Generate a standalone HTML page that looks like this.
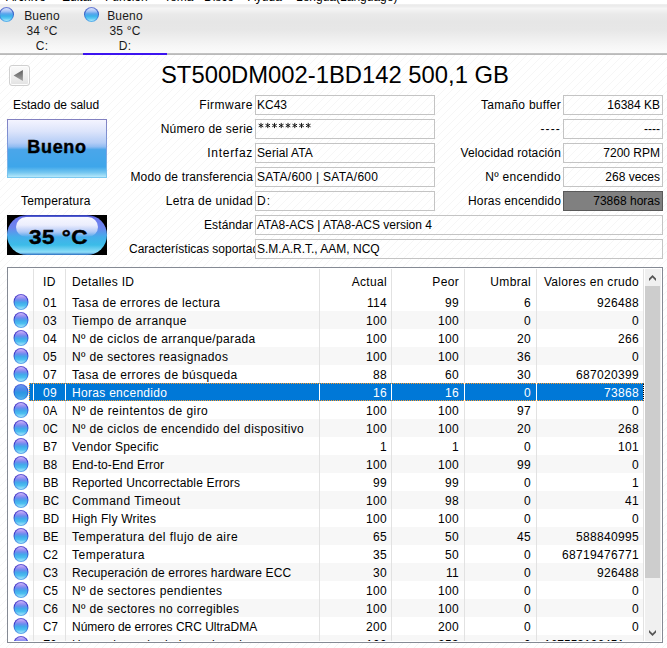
<!DOCTYPE html>
<html><head><meta charset="utf-8"><style>
*{margin:0;padding:0;box-sizing:border-box}
html,body{width:667px;height:648px;overflow:hidden;background:#fff;font-family:"Liberation Sans",sans-serif;font-size:12px;color:#000}
.a{position:absolute;white-space:nowrap}
#menu{position:absolute;left:0;top:0;width:667px;height:5px;background:#fff;overflow:hidden}
#menu span{position:absolute;top:-9px;color:#000;line-height:12px}
#tabs{position:absolute;left:0;top:4px;width:667px;height:49px;background:linear-gradient(#f2f2f2 0,#ebebeb 1px,#ebebeb 2px,#f5f5f5 4.5px,#eaeaea 10px,#e6e6e6 18px,#e7e7e7 26px,#f6f6f6 42px,#fbfbfb 49px)}
#tabsline{position:absolute;left:0;top:53px;width:667px;height:2px;background:linear-gradient(#c6c6c6,#b6b6b6)}
#tabul{position:absolute;left:83px;top:53px;width:84px;height:2px;background:#3c14f0}
.tab{position:absolute;top:5px;width:84px;height:48px;text-align:center;color:#1a1a1a;line-height:15px;padding-top:4px;letter-spacing:0.2px}
.dot{position:absolute;width:15px;height:16px;border-radius:50%;background:linear-gradient(#6a5ad8,#3a34c4 30%,#3a6ad8 60%,#60b0ee);transform:translateX(0.5px)}
.dot:before{content:"";position:absolute;left:1px;top:1px;width:13px;height:14px;border-radius:50%;background:linear-gradient(#ccbafa 0%,#a294f2 18%,#6a8cee 36%,#40aaea 55%,#4cbef0 75%,#a4e6fa 100%)}
.tdot{position:absolute;width:15px;height:15px;border-radius:50%;background:linear-gradient(#7080d8,#3058c0 35%,#3a78d8 65%,#60b8ee)}
.tdot:before{content:"";position:absolute;left:1px;top:1px;width:13px;height:13px;border-radius:50%;background:linear-gradient(#dce4fc 0%,#a8c4f6 25%,#58a4ec 45%,#3cb2ea 62%,#5ac8f2 80%,#acE8fa 100%)}
.sdot{position:absolute;width:15px;height:16px;transform:translateX(0.5px);border-radius:50%;background:linear-gradient(#5a6ee0,#2a4cd0 40%,#2a6ad8 70%,#40a0ec)}
.sdot:before{content:"";position:absolute;left:1px;top:1px;width:13px;height:14px;border-radius:50%;background:linear-gradient(#6a98ee 0%,#4c88ea 30%,#2c96e2 55%,#3aa2e6 80%,#5ab4ec 100%)}
.srow .sep2{position:absolute;top:0;width:1px;height:18px;background:#fff}
#main{position:absolute;left:0;top:55px;width:667px;height:593px;overflow:hidden}
.lbl{position:absolute;text-align:right;white-space:nowrap;line-height:14px;letter-spacing:0.15px}
.box{position:absolute;height:20px;border:1px solid #c4c4c4;background:transparent;padding:0 2px 0 1px;line-height:18px;white-space:nowrap;overflow:hidden}
.r{text-align:right}
#tbl{position:absolute;left:7px;top:267px;width:656px;height:376px;border:1px solid #858a94;background:#fff;overflow:hidden;letter-spacing:0.33px}
.row{position:absolute;left:0;width:636px;height:18px;line-height:18px}
.bg{position:absolute;left:21px;top:0;width:615px;height:18px;background:#f7f7f7}
.sel .bg{background:#0078d7}
.c{position:absolute;top:1px;white-space:nowrap}
.sel .c{color:#fff}
.sep{position:absolute;top:1px;width:1px;height:372px;background:#e2e2e2;z-index:2}
.hc{position:absolute;top:7px;line-height:14px;white-space:nowrap}
</style></head><body>
<div id="menu"><span style="left:6px">Archivo</span><span style="left:62px">Editar</span><span style="left:105px">Función</span><span style="left:164px">Tema</span><span style="left:204px">Disco</span><span style="left:248px">Ayuda</span><span style="left:296px">Lengua(Language)</span></div>
<div id="tabs"></div><div id="tabsline"></div><div id="tabul"></div>
<div class="tdot" style="left:-1px;top:7px"></div><div class="tdot" style="left:84px;top:7px"></div>
<div class="tab" style="left:0">Bueno<br>34 °C<br>C:</div><div class="tab" style="left:83px">Bueno<br>35 °C<br>D:</div>
<div id="main"><svg width="667" height="593" style="position:absolute;left:0;top:0" shape-rendering="crispEdges"><defs><pattern id="dg" patternUnits="userSpaceOnUse" x="7" y="0" width="8" height="8"><rect x="7" y="0" width="1" height="1" fill="#f6f6f6"/><rect x="6" y="1" width="1" height="1" fill="#f6f6f6"/><rect x="5" y="2" width="1" height="1" fill="#f6f6f6"/><rect x="4" y="3" width="1" height="1" fill="#f6f6f6"/><rect x="3" y="4" width="1" height="1" fill="#f6f6f6"/><rect x="2" y="5" width="1" height="1" fill="#f6f6f6"/><rect x="1" y="6" width="1" height="1" fill="#f6f6f6"/><rect x="0" y="7" width="1" height="1" fill="#f6f6f6"/></pattern></defs><rect x="0" y="0" width="667" height="593" fill="url(#dg)"/></svg></div>
<div style="position:absolute;left:9px;top:65px;width:21px;height:21px;border:1px solid #d0d0d0;border-radius:3px;background:linear-gradient(#fafafa,#eeeeee 60%,#e2e2e2);box-shadow:inset 0 0 0 1px #fdfdfd"><svg width="19" height="19" style="position:absolute;left:0;top:0"><defs><linearGradient id="ag" x1="0" y1="0" x2="0" y2="1"><stop offset="0" stop-color="#5e5e5e"/><stop offset="1" stop-color="#a4a4a4"/></linearGradient></defs><path d="M3.6 9.4L12.9 4V15Z" fill="url(#ag)"/></svg></div>
<div class="a" style="left:161px;top:61px;font-size:23.8px;line-height:28px">ST500DM002-1BD142 500,1 GB</div>
<div class="a" style="left:13px;top:98px;line-height:14px">Estado de salud</div>
<div style="position:absolute;left:7px;top:119px;width:100px;height:59px;background:linear-gradient(#8280c0,#7c9ee0 50%,#7ccaf0)"><div style="position:absolute;left:1px;top:1px;width:98px;height:57px;background:linear-gradient(#f4f4ff 0%,#dce4fb 20%,#b4cdf6 40%,#90bcf2 47%,#4aa6ea 52%,#3ea6ea 82%,#74c6f0 92%,#b6e8fa 100%)"></div><div style="position:absolute;left:0;top:0;width:100px;height:59px;text-align:center;font-weight:bold;font-size:18px;line-height:57px;letter-spacing:0.7px;-webkit-text-stroke:0.4px #000">Bueno</div></div>
<div class="a" style="left:21px;top:194px;line-height:14px;letter-spacing:0.2px">Temperatura</div>
<div style="position:absolute;left:7px;top:215px;width:100px;height:40px;background:#000"><div style="position:absolute;left:0;top:0;width:100px;height:40px;border-radius:20px;background:linear-gradient(#2a36b0 0%,#6e78ee 7%,#6c86ee 32%,#44aeea 55%,#3cbce8 75%,#90def8 93%,#2a6ec0 100%)"></div><div style="position:absolute;left:9px;top:2px;width:82px;height:20px;border-radius:10px/10px;background:linear-gradient(#f8f8ff 0%,#eceefd 40%,rgba(196,214,248,0.8) 75%,rgba(150,190,240,0) 100%)"></div><div style="position:absolute;left:22px;top:0;width:70px;height:40px;font-weight:bold;font-size:21px;line-height:43px;letter-spacing:0.5px;white-space:nowrap;transform:scaleX(1.07);transform-origin:0 0;-webkit-text-stroke:0.4px #000">35 °C</div></div>
<div class="lbl" style="right:414px;top:98px;letter-spacing:0.48px">Firmware</div>
<div class="box" style="left:255px;top:95px;width:180px">KC43</div>
<div class="lbl" style="right:414px;top:122px;letter-spacing:0.24px">Número de serie</div>
<div class="box" style="left:255px;top:119px;width:180px"><svg width="60" height="12" style="position:absolute;left:2px;top:1px"><g transform="translate(3.0,4.5)"><path d="M0 -2.6V2.6M-2.3 -1.3L2.3 1.3M-2.3 1.3L2.3 -1.3" stroke="#111" stroke-width="0.95"/></g><g transform="translate(9.75,4.5)"><path d="M0 -2.6V2.6M-2.3 -1.3L2.3 1.3M-2.3 1.3L2.3 -1.3" stroke="#111" stroke-width="0.95"/></g><g transform="translate(16.5,4.5)"><path d="M0 -2.6V2.6M-2.3 -1.3L2.3 1.3M-2.3 1.3L2.3 -1.3" stroke="#111" stroke-width="0.95"/></g><g transform="translate(23.25,4.5)"><path d="M0 -2.6V2.6M-2.3 -1.3L2.3 1.3M-2.3 1.3L2.3 -1.3" stroke="#111" stroke-width="0.95"/></g><g transform="translate(30.0,4.5)"><path d="M0 -2.6V2.6M-2.3 -1.3L2.3 1.3M-2.3 1.3L2.3 -1.3" stroke="#111" stroke-width="0.95"/></g><g transform="translate(36.75,4.5)"><path d="M0 -2.6V2.6M-2.3 -1.3L2.3 1.3M-2.3 1.3L2.3 -1.3" stroke="#111" stroke-width="0.95"/></g><g transform="translate(43.5,4.5)"><path d="M0 -2.6V2.6M-2.3 -1.3L2.3 1.3M-2.3 1.3L2.3 -1.3" stroke="#111" stroke-width="0.95"/></g><g transform="translate(50.25,4.5)"><path d="M0 -2.6V2.6M-2.3 -1.3L2.3 1.3M-2.3 1.3L2.3 -1.3" stroke="#111" stroke-width="0.95"/></g></svg></div>
<div class="lbl" style="right:414px;top:146px;letter-spacing:0.71px">Interfaz</div>
<div class="box" style="left:255px;top:143px;width:180px"><span style="letter-spacing:0.1px">Serial ATA</span></div>
<div class="lbl" style="right:414px;top:170px;letter-spacing:0.15px">Modo de transferencia</div>
<div class="box" style="left:255px;top:167px;width:180px"><span style="letter-spacing:0.3px">SATA/600 | SATA/600</span></div>
<div class="lbl" style="right:414px;top:194px;letter-spacing:0.25px">Letra de unidad</div>
<div class="box" style="left:255px;top:191px;width:180px"><span style="letter-spacing:1px">D:</span></div>
<div class="lbl" style="right:106px;top:98px;letter-spacing:0.27px">Tamaño buffer</div>
<div class="box r" style="left:563px;top:95px;width:100px">16384 KB</div>
<div class="lbl" style="right:106px;top:122px;letter-spacing:1.15px">----</div>
<div class="box r" style="left:563px;top:119px;width:100px">----</div>
<div class="lbl" style="right:106px;top:146px;letter-spacing:0.14px">Velocidad rotación</div>
<div class="box r" style="left:563px;top:143px;width:100px">7200 RPM</div>
<div class="lbl" style="right:106px;top:170px;letter-spacing:0.34px">Nº encendido</div>
<div class="box r" style="left:563px;top:167px;width:100px">268 veces</div>
<div class="lbl" style="right:106px;top:194px;letter-spacing:0.15px">Horas encendido</div>
<div class="box r" style="left:563px;top:191px;width:100px;background:#808080;border-color:#5a5a5a">73868 horas</div>
<div class="lbl" style="right:414px;top:218px;letter-spacing:0.12px">Estándar</div>
<div class="box" style="left:255px;top:215px;width:408px">ATA8-ACS | ATA8-ACS version 4</div>
<div class="lbl" style="left:129px;width:126px;overflow:hidden;text-align:left;letter-spacing:0;top:242px">Características soportadas</div>
<div class="box" style="left:255px;top:239px;width:408px">S.M.A.R.T., AAM, NCQ</div>
<div id="tbl"><div style="position:absolute;left:0;top:1px;width:654px;height:372px;overflow:hidden"><div style="position:absolute;left:0;top:-1px;width:654px;height:374px"><div class="sep" style="left:25px"></div><div class="sep" style="left:57px"></div><div class="sep" style="left:311px"></div><div class="sep" style="left:383px"></div><div class="sep" style="left:456px"></div><div class="sep" style="left:528px"></div><div class="sep" style="left:635px"></div><div class="hc" style="left:35px">ID</div><div class="hc" style="left:64px">Detalles ID</div><div class="hc" style="right:275px">Actual</div><div class="hc" style="right:203px">Peor</div><div class="hc" style="right:131px">Umbral</div><div class="hc" style="right:23px">Valores en crudo</div><div class="row" style="top:25px"><div class="dot" style="left:5px;top:1px"></div><div class="c" style="left:35px;letter-spacing:0.33px">01</div><div class="c" style="left:64px;letter-spacing:0.342px">Tasa de errores de lectura</div><div class="c" style="right:257px">114</div><div class="c" style="right:185px">99</div><div class="c" style="right:113px">6</div><div class="c" style="right:5px">926488</div></div><div class="row" style="top:43px"><div class="bg"></div><div class="dot" style="left:5px;top:1px"></div><div class="c" style="left:35px;letter-spacing:0.33px">03</div><div class="c" style="left:64px;letter-spacing:0.401px">Tiempo de arranque</div><div class="c" style="right:257px">100</div><div class="c" style="right:185px">100</div><div class="c" style="right:113px">0</div><div class="c" style="right:5px">0</div></div><div class="row" style="top:61px"><div class="dot" style="left:5px;top:1px"></div><div class="c" style="left:35px;letter-spacing:0.33px">04</div><div class="c" style="left:64px;letter-spacing:0.380px">Nº de ciclos de arranque/parada</div><div class="c" style="right:257px">100</div><div class="c" style="right:185px">100</div><div class="c" style="right:113px">20</div><div class="c" style="right:5px">266</div></div><div class="row" style="top:79px"><div class="bg"></div><div class="dot" style="left:5px;top:1px"></div><div class="c" style="left:35px;letter-spacing:0.33px">05</div><div class="c" style="left:64px;letter-spacing:0.350px">Nº de sectores reasignados</div><div class="c" style="right:257px">100</div><div class="c" style="right:185px">100</div><div class="c" style="right:113px">36</div><div class="c" style="right:5px">0</div></div><div class="row" style="top:97px"><div class="dot" style="left:5px;top:1px"></div><div class="c" style="left:35px;letter-spacing:0.33px">07</div><div class="c" style="left:64px;letter-spacing:0.353px">Tasa de errores de búsqueda</div><div class="c" style="right:257px">88</div><div class="c" style="right:185px">60</div><div class="c" style="right:113px">30</div><div class="c" style="right:5px">687020399</div></div><div class="row sel" style="top:115px"><div class="bg"></div><div style="position:absolute;left:25px;top:0;width:1px;height:18px;background:#fff;z-index:3"></div><div style="position:absolute;left:57px;top:0;width:1px;height:18px;background:#fff;z-index:3"></div><div style="position:absolute;left:311px;top:0;width:1px;height:18px;background:#fff;z-index:3"></div><div style="position:absolute;left:383px;top:0;width:1px;height:18px;background:#fff;z-index:3"></div><div style="position:absolute;left:456px;top:0;width:1px;height:18px;background:#fff;z-index:3"></div><div style="position:absolute;left:528px;top:0;width:1px;height:18px;background:#fff;z-index:3"></div><div style="position:absolute;left:21px;top:0;width:615px;height:18px;border:1px dotted #ff9a28;border-right-color:#000;border-left-color:#ff9a28;z-index:3"></div><div class="sdot" style="left:5px;top:1px"></div><div class="c" style="left:35px;letter-spacing:0.33px">09</div><div class="c" style="left:64px;letter-spacing:0.301px">Horas encendido</div><div class="c" style="right:257px">16</div><div class="c" style="right:185px">16</div><div class="c" style="right:113px">0</div><div class="c" style="right:5px">73868</div></div><div class="row" style="top:133px"><div class="dot" style="left:5px;top:1px"></div><div class="c" style="left:35px;letter-spacing:0.1px;transform:scaleX(0.96);transform-origin:0 0">0A</div><div class="c" style="left:64px;letter-spacing:0.434px">Nº de reintentos de giro</div><div class="c" style="right:257px">100</div><div class="c" style="right:185px">100</div><div class="c" style="right:113px">97</div><div class="c" style="right:5px">0</div></div><div class="row" style="top:151px"><div class="bg"></div><div class="dot" style="left:5px;top:1px"></div><div class="c" style="left:35px;letter-spacing:0.1px;transform:scaleX(0.96);transform-origin:0 0">0C</div><div class="c" style="left:64px;letter-spacing:0.365px">Nº de ciclos de encendido del dispositivo</div><div class="c" style="right:257px">100</div><div class="c" style="right:185px">100</div><div class="c" style="right:113px">20</div><div class="c" style="right:5px">268</div></div><div class="row" style="top:169px"><div class="dot" style="left:5px;top:1px"></div><div class="c" style="left:35px;letter-spacing:0.1px;transform:scaleX(0.96);transform-origin:0 0">B7</div><div class="c" style="left:64px;letter-spacing:0.230px">Vendor Specific</div><div class="c" style="right:257px">1</div><div class="c" style="right:185px">1</div><div class="c" style="right:113px">0</div><div class="c" style="right:5px">101</div></div><div class="row" style="top:187px"><div class="bg"></div><div class="dot" style="left:5px;top:1px"></div><div class="c" style="left:35px;letter-spacing:0.1px;transform:scaleX(0.96);transform-origin:0 0">B8</div><div class="c" style="left:64px;letter-spacing:0.083px">End-to-End Error</div><div class="c" style="right:257px">100</div><div class="c" style="right:185px">100</div><div class="c" style="right:113px">99</div><div class="c" style="right:5px">0</div></div><div class="row" style="top:205px"><div class="dot" style="left:5px;top:1px"></div><div class="c" style="left:35px;letter-spacing:0.1px;transform:scaleX(0.96);transform-origin:0 0">BB</div><div class="c" style="left:64px;letter-spacing:0.162px">Reported Uncorrectable Errors</div><div class="c" style="right:257px">99</div><div class="c" style="right:185px">99</div><div class="c" style="right:113px">0</div><div class="c" style="right:5px">1</div></div><div class="row" style="top:223px"><div class="bg"></div><div class="dot" style="left:5px;top:1px"></div><div class="c" style="left:35px;letter-spacing:0.1px;transform:scaleX(0.96);transform-origin:0 0">BC</div><div class="c" style="left:64px;letter-spacing:0.473px">Command Timeout</div><div class="c" style="right:257px">100</div><div class="c" style="right:185px">98</div><div class="c" style="right:113px">0</div><div class="c" style="right:5px">41</div></div><div class="row" style="top:241px"><div class="dot" style="left:5px;top:1px"></div><div class="c" style="left:35px;letter-spacing:0.1px;transform:scaleX(0.96);transform-origin:0 0">BD</div><div class="c" style="left:64px;letter-spacing:0.201px">High Fly Writes</div><div class="c" style="right:257px">100</div><div class="c" style="right:185px">100</div><div class="c" style="right:113px">0</div><div class="c" style="right:5px">0</div></div><div class="row" style="top:259px"><div class="bg"></div><div class="dot" style="left:5px;top:1px"></div><div class="c" style="left:35px;letter-spacing:0.1px;transform:scaleX(0.96);transform-origin:0 0">BE</div><div class="c" style="left:64px;letter-spacing:0.484px">Temperatura del flujo de aire</div><div class="c" style="right:257px">65</div><div class="c" style="right:185px">50</div><div class="c" style="right:113px">45</div><div class="c" style="right:5px">588840995</div></div><div class="row" style="top:277px"><div class="dot" style="left:5px;top:1px"></div><div class="c" style="left:35px;letter-spacing:0.1px;transform:scaleX(0.96);transform-origin:0 0">C2</div><div class="c" style="left:64px;letter-spacing:0.500px">Temperatura</div><div class="c" style="right:257px">35</div><div class="c" style="right:185px">50</div><div class="c" style="right:113px">0</div><div class="c" style="right:5px">68719476771</div></div><div class="row" style="top:295px"><div class="bg"></div><div class="dot" style="left:5px;top:1px"></div><div class="c" style="left:35px;letter-spacing:0.1px;transform:scaleX(0.96);transform-origin:0 0">C3</div><div class="c" style="left:64px;letter-spacing:0.144px">Recuperación de errores hardware ECC</div><div class="c" style="right:257px">30</div><div class="c" style="right:185px">11</div><div class="c" style="right:113px">0</div><div class="c" style="right:5px">926488</div></div><div class="row" style="top:313px"><div class="dot" style="left:5px;top:1px"></div><div class="c" style="left:35px;letter-spacing:0.1px;transform:scaleX(0.96);transform-origin:0 0">C5</div><div class="c" style="left:64px;letter-spacing:0.397px">Nº de sectores pendientes</div><div class="c" style="right:257px">100</div><div class="c" style="right:185px">100</div><div class="c" style="right:113px">0</div><div class="c" style="right:5px">0</div></div><div class="row" style="top:331px"><div class="bg"></div><div class="dot" style="left:5px;top:1px"></div><div class="c" style="left:35px;letter-spacing:0.1px;transform:scaleX(0.96);transform-origin:0 0">C6</div><div class="c" style="left:64px;letter-spacing:0.355px">Nº de sectores no corregibles</div><div class="c" style="right:257px">100</div><div class="c" style="right:185px">100</div><div class="c" style="right:113px">0</div><div class="c" style="right:5px">0</div></div><div class="row" style="top:349px"><div class="dot" style="left:5px;top:1px"></div><div class="c" style="left:35px;letter-spacing:0.1px;transform:scaleX(0.96);transform-origin:0 0">C7</div><div class="c" style="left:64px;letter-spacing:-0.008px">Número de errores CRC UltraDMA</div><div class="c" style="right:257px">200</div><div class="c" style="right:185px">200</div><div class="c" style="right:113px">0</div><div class="c" style="right:5px">0</div></div><div class="row" style="top:367px"><div class="bg"></div><div class="dot" style="left:5px;top:1px"></div><div class="c" style="left:35px;letter-spacing:0.1px;transform:scaleX(0.96);transform-origin:0 0">F0</div><div class="c" style="left:64px;letter-spacing:0.330px">Horas de vuelo de los cabezales</div><div class="c" style="right:257px">100</div><div class="c" style="right:185px">253</div><div class="c" style="right:113px">0</div><div class="c" style="left:536px;letter-spacing:0">167553196451</div></div><div style="position:absolute;left:637px;top:1px;width:16px;height:372px;background:#f0f0f0;z-index:3"></div><div style="position:absolute;left:637px;top:18px;width:15px;height:292px;background:#cdcdcd;z-index:3"></div><svg style="position:absolute;left:637px;top:1px;z-index:4" width="16" height="372"><path d="M7.5 6L11 9.5V12L7.5 8.5L4 12V9.5Z" fill="#555"/><path d="M7.5 367L11 363.5V361L7.5 364.5L4 361V363.5Z" fill="#555"/></svg></div></div></div>
</body></html>
